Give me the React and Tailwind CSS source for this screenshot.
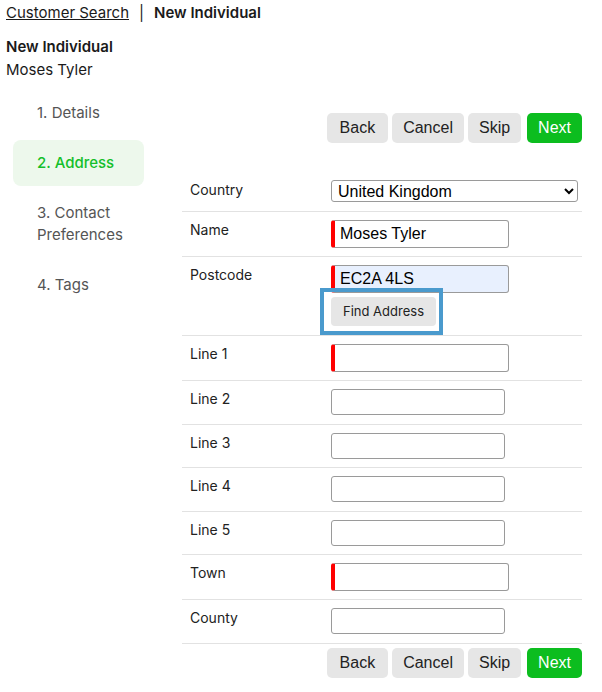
import React from "react";

const geo = { fontFamily: "Inter, 'Noto Sans', sans-serif" };
const arial = { fontFamily: "'Liberation Sans', Arial, sans-serif" };

function Buttons() {
  return (
    <div className="flex justify-end gap-[4px] text-[16px]" style={arial}>
      <button className="h-[30px] rounded-[5px] bg-[#e6e6e6] px-[13px] text-[#222]">Back</button>
      <button className="h-[30px] rounded-[5px] bg-[#e6e6e6] px-[11px] text-[#222]">Cancel</button>
      <button className="h-[30px] rounded-[5px] bg-[#e6e6e6] px-[11px] text-[#222]">Skip</button>
      <button className="ml-[2px] h-[30px] rounded-[5px] bg-[#0cbd1f] px-[11px] text-white">Next</button>
    </div>
  );
}

function TextInput({ required, value, filled }) {
  return (
    <input
      readOnly
      value={value || ""}
      style={arial}
      className={`block rounded-[3px] border border-[#9a9a9a] px-[5px] text-[16px] text-black outline-none ${
        required ? "h-[28px] w-[178px] border-l-[4px] border-l-[#f00]" : "h-[26px] w-[174px]"
      } ${filled ? "bg-[#e8f0fe]" : "bg-white"}`}
    />
  );
}

function Row({ label, children, className = "" }) {
  return (
    <div className={`flex items-start border-b border-[#e2e2e2] ${className}`}>
      <div className="w-[149px] shrink-0 pl-[8px] text-[14px] leading-[20px] text-[#222]">{label}</div>
      <div className="flex flex-col">{children}</div>
    </div>
  );
}

export default function App() {
  const steps = [
    { id: 1, label: "1. Details" },
    { id: 2, label: "2. Address", active: true },
    { id: 3, label: "3. Contact Preferences" },
    { id: 4, label: "4. Tags" },
  ];

  return (
    <div className="min-h-[692px] w-[602px] bg-white text-[#1a1a1a]" style={geo}>
      <div className="flex items-center px-[6px] pt-[3px] text-[15px] leading-[20px]">
        <span className="underline">Customer Search</span>
        <span className="mx-[10px]">|</span>
        <span className="font-semibold">New Individual</span>
      </div>

      <div className="px-[6px] pt-[13px]">
        <div className="text-[15px] font-semibold leading-[22px]">New Individual</div>
        <div className="text-[15px] leading-[24px]">Moses Tyler</div>
      </div>

      <div className="mt-[8px] flex">
        <div className="ml-[13px] flex w-[131px] flex-col gap-[4px]">
          {steps.map((s) => (
            <div
              key={s.id}
              className={`rounded-[8px] py-[12px] pl-[24px] pr-[8px] text-[15px] leading-[22px] ${
                s.active ? "bg-[#edf8ec] font-medium text-[#14bf2a]" : "text-[#555]"
              }`}
            >
              {s.label}
            </div>
          ))}
        </div>

        <div className="ml-[38px] w-[400px] pt-[23px]">
          <Buttons />

          <div className="mt-[28px]">
            <div className="flex items-start border-b border-[#e2e2e2] pb-[9px] pt-[9px]">
              <div className="w-[149px] shrink-0 pl-[8px] text-[14px] leading-[20px] text-[#222]">Country</div>
              <select
                style={arial}
                className="block h-[22px] w-[247px] rounded-[3px] border border-[#9a9a9a] bg-white pl-[2px] text-[16px] text-black"
                defaultValue="United Kingdom"
              >
                <option>United Kingdom</option>
              </select>
            </div>

            <Row label="Name" className="py-[8px]">
              <TextInput required value="Moses Tyler" />
            </Row>

            <Row label="Postcode" className="pb-[9px] pt-[8px]">
              <div className="relative">
                <TextInput required value="EC2A 4LS" filled />
                <div className="mt-[4px]">
                  <button className="block h-[29px] rounded-[4px] bg-[#e6e6e6] px-[12px] text-[13px] text-[#222]">
                    Find Address
                  </button>
                </div>
                <div className="pointer-events-none absolute left-[-11px] top-[23px] h-[47px] w-[123px] border-[4px] border-[#4a9acd]" />
              </div>
            </Row>

            <Row label="Line 1" className="py-[8px]">
              <TextInput required />
            </Row>
            <Row label="Line 2" className="pb-[9px] pt-[8px]">
              <TextInput />
            </Row>
            <Row label="Line 3" className="py-[8px]">
              <TextInput />
            </Row>
            <Row label="Line 4" className="pb-[9px] pt-[8px]">
              <TextInput />
            </Row>
            <Row label="Line 5" className="py-[8px]">
              <TextInput />
            </Row>
            <Row label="Town" className="py-[8px]">
              <TextInput required />
            </Row>
            <Row label="County" className="pb-[9px] pt-[8px]">
              <TextInput />
            </Row>

            <div className="mt-[4px]">
              <Buttons />
            </div>
          </div>
        </div>
      </div>
    </div>
  );
}
